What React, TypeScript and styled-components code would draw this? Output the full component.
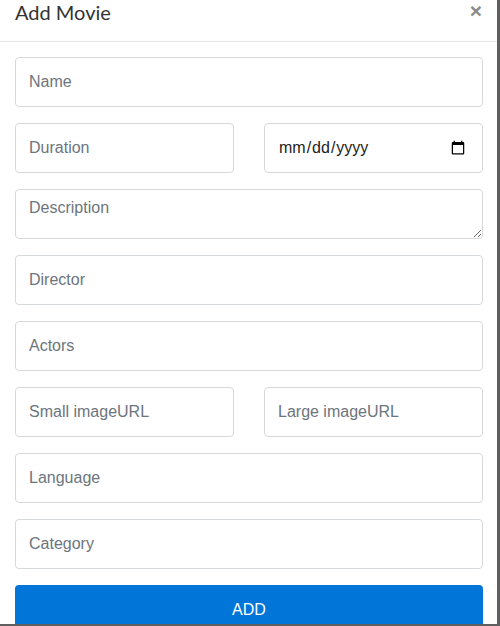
import React from "react";
import styled, { createGlobalStyle } from "styled-components";

const Global = createGlobalStyle`
  html, body { margin: 0; padding: 0; background: #ffffff; }
  * { box-sizing: border-box; }
`;

const Frame = styled.div`
  width: 500px;
  height: 626px;
  overflow: hidden;
  background: #5f5f5f;
  display: flex;
  flex-direction: column;
`;

const Modal = styled.div`
  width: 497px;
  height: 624px;
  background: #ffffff;
  overflow: hidden;
  display: flex;
  flex-direction: column;
`;

const Header = styled.div`
  height: 42px;
  flex-shrink: 0;
  border-bottom: 1px solid #e5e5e5;
  padding: 0 15px;
  display: flex;
  justify-content: space-between;
  align-items: flex-start;
`;

const Title = styled.h4`
  margin: 0;
  font-family: Lato, "Liberation Sans", sans-serif;
  font-weight: 400;
  font-size: 20px;
  line-height: 25px;
  color: #333333;
`;

const Close = styled.button`
  border: none;
  background: none;
  padding: 0;
  margin: 0;
  font-family: "Liberation Sans", Arial, sans-serif;
  font-size: 21px;
  font-weight: 700;
  line-height: 21px;
  color: #8a8a8a;
  cursor: pointer;
`;

const Body = styled.form`
  padding: 15px 14px 0 15px;
  display: flex;
  flex-direction: column;
  gap: 16px;
`;

const Row = styled.div`
  display: grid;
  grid-template-columns: 1fr 1fr;
  column-gap: 30px;
`;

const fieldCss = `
  width: 100%;
  height: 50px;
  border: 1px solid #d6d9dc;
  border-radius: 4px;
  padding: 0 13px;
  font-family: "Liberation Sans", Arial, sans-serif;
  font-size: 16px;
  color: #333;
  background: #fff;
  outline: none;
  &::placeholder { color: #6c757d; opacity: 1; }
`;

const Input = styled.input`
  ${fieldCss}
`;

const DateInput = styled.input`
  ${fieldCss}
  color: #222;
  padding-right: 14px;
`;

const TextArea = styled.textarea`
  ${fieldCss}
  display: block;
  padding: 9px 13px;
  resize: vertical;
`;

const AddButton = styled.button`
  width: 100%;
  height: 50px;
  border: none;
  border-radius: 4px;
  background: #0275d8;
  color: #ffffff;
  font-family: "Liberation Sans", Arial, sans-serif;
  font-size: 16px;
  text-transform: uppercase;
  padding: 0;
  cursor: pointer;
`;

export default function App() {
  return (
    <>
      <Global />
      <Frame>
        <Modal>
          <Header>
            <Title>Add Movie</Title>
            <Close type="button" aria-label="Close">×</Close>
          </Header>
          <Body onSubmit={(e) => e.preventDefault()}>
            <Input placeholder="Name" />
            <Row>
              <Input placeholder="Duration" />
              <DateInput type="date" />
            </Row>
            <TextArea placeholder="Description" />
            <Input placeholder="Director" />
            <Input placeholder="Actors" />
            <Row>
              <Input placeholder="Small imageURL" />
              <Input placeholder="Large imageURL" />
            </Row>
            <Input placeholder="Language" />
            <Input placeholder="Category" />
            <AddButton type="submit">Add</AddButton>
          </Body>
        </Modal>
      </Frame>
    </>
  );
}
